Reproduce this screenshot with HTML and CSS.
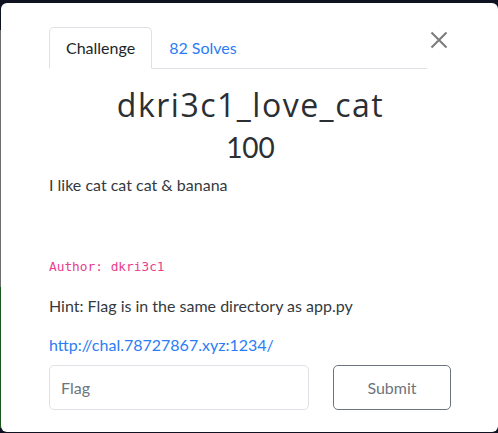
FILE: index.html
```html
<!DOCTYPE html>
<html lang="en">
<head>
<meta charset="utf-8">
<title>dkri3c1_love_cat</title>
<link rel="stylesheet" href="styles.css">
</head>
<body>
<div class="modal">
  <div class="header-row">
    <ul class="tabs">
      <li class="tab active">Challenge</li>
      <li class="tab link-tab">82 Solves</li>
    </ul>
    <button class="close" aria-label="Close">
      <svg width="18" height="18" viewBox="0 0 18 18"><path d="M1.5 1.5 L16.5 16.5 M16.5 1.5 L1.5 16.5" stroke="#7b7b7b" stroke-width="2" fill="none"/></svg>
    </button>
  </div>
  <h2 class="title">dkri3c1_love_cat</h2>
  <h4 class="value">100</h4>
  <p class="desc">I like cat cat cat &amp; banana</p>
  <p class="author"><code>Author: dkri3c1</code></p>
  <p class="hint">Hint: Flag is in the same directory as app.py</p>
  <p class="url"><a href="#">http://chal.78727867.xyz:1234/</a></p>
  <div class="form-row">
    <input class="flag" type="text" placeholder="Flag">
    <button class="submit">Submit</button>
  </div>
</div>
</body>
</html>
```
FILE: styles.css
```css
html, body {
  margin: 0;
  padding: 0;
  height: 100%;
}
body {
  background:
    linear-gradient(to bottom, #0f1220 0 30px, #6d6d6d 30px 287px, #1b561d 287px 428px, #0f1220 428px) left top / 1px 100% no-repeat,
    #0f1220;
  font-family: "Lato", "Liberation Sans", sans-serif;
  color: #212529;
  overflow: hidden;
  padding-top: 3px;
  padding-left: 1px;
  box-sizing: border-box;
}
.modal {
  background: #fff;
  width: 497px;
  height: 429px;
  border-radius: 6px;
  box-sizing: border-box;
  padding: 24px 46px 0 48px;
}
.header-row {
  display: flex;
  align-items: flex-start;
}
.tabs {
  list-style: none;
  margin: 0;
  padding: 0;
  display: flex;
  width: 378px;
  border-bottom: 1px solid #dee2e6;
}
.tab {
  font-size: 16px;
  line-height: 24px;
  padding: 8px 16px;
  margin-bottom: -1px;
  border: 1px solid transparent;
  border-top-left-radius: 5px;
  border-top-right-radius: 5px;
}
.tab.active {
  border-color: #dee2e6 #dee2e6 #fff;
  color: #212529;
  background: #fff;
}
.link-tab {
  color: #2a7df4;
}
.close {
  background: none;
  border: 0;
  padding: 0;
  margin: 4px 0 0 3px;
  width: 18px;
  height: 18px;
  line-height: 0;
}
.title {
  font-family: "Open Sans", "Liberation Sans", sans-serif;
  font-weight: 400;
  font-size: 32px;
  letter-spacing: 1.5px;
  line-height: 38px;
  text-align: center;
  margin: 17px 0 0;
  color: #2b2f33;
}
.value {
  font-size: 28px;
  font-weight: 400;
  line-height: 34px;
  text-align: center;
  margin: 6px 0 0;
  color: #2b2f33;
}
.desc, .hint, .url {
  font-size: 16px;
  line-height: 24px;
  margin: 9px 0 0;
  color: #343a40;
}
.author {
  margin: 56px 0 0;
  line-height: 24px;
}
.author code {
  font-family: "DejaVu Sans Mono", "Liberation Mono", monospace;
  font-size: 12.8px;
  color: #e83e8c;
}
.hint {
  margin-top: 15px;
}
.url {
  margin-top: 15px;
}
.url a {
  color: #2a7df4;
  text-decoration: none;
}
.form-row {
  display: flex;
  gap: 24px;
  margin-top: 8px;
}
.flag {
  width: 260px;
  height: 45px;
  box-sizing: border-box;
  border: 1px solid #dfe2e6;
  border-radius: 5px;
  padding: 0 11px;
  font-family: "Lato", sans-serif;
  font-size: 16px;
  color: #495057;
}
.flag::placeholder {
  color: #6c757d;
}
.submit {
  width: 118px;
  height: 45px;
  box-sizing: border-box;
  border: 1px solid #6c757d;
  border-radius: 5px;
  background: #fff;
  font-family: "Lato", sans-serif;
  font-size: 16px;
  color: #6c757d;
}
```
